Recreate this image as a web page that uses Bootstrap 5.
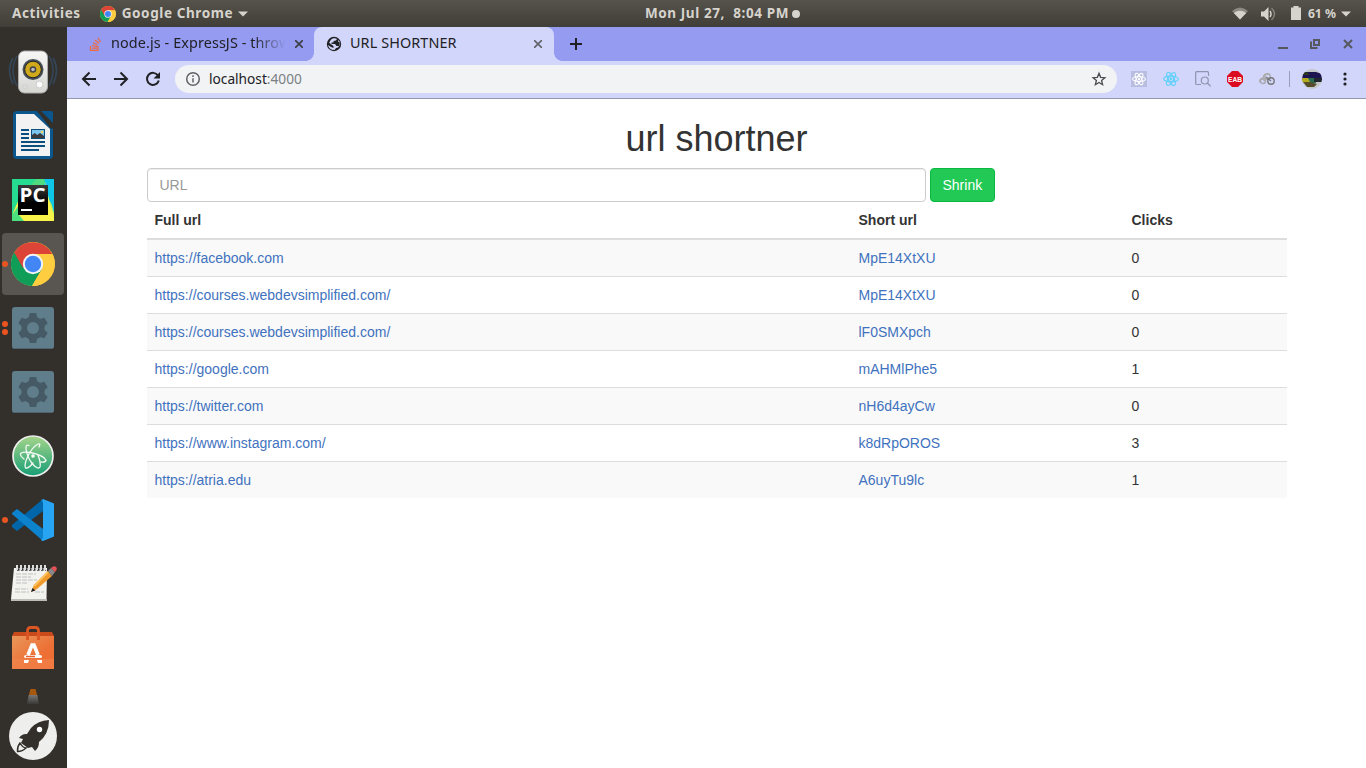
<!DOCTYPE html>
<html lang="en">
<head>
<meta charset="utf-8">
<title>URL SHORTNER</title>
<meta name="viewport" content="width=device-width, initial-scale=1">
<link href="https://cdn.jsdelivr.net/npm/bootstrap@5.3.0/dist/css/bootstrap.min.css" rel="stylesheet">
<style>
  html, body { height: 100%; overflow: hidden; }
  body { font-family: "Liberation Sans", Arial, sans-serif; font-size: 14px; line-height: 20px; color: #333; background: #fff; }
  svg { display: block; flex: none; }

  /* Desktop panel */
  .panel { height: 27px; background: linear-gradient(#56534b, #403e38); color: #d6d3cd; font: 700 13.5px/27px "Noto Sans", sans-serif; letter-spacing: .6px; display: grid; grid-template-columns: 1fr auto 1fr; white-space: pre; }
  .panel .clock { margin-left: 79px; }
  .panel .battery { margin-left: 7px; font-size: 12.2px; letter-spacing: 0; }

  /* Launcher */
  .dock { width: 67px; background: #33302c; padding-top: 13px; flex: none; }
  .tile { height: 64px; width: 66px; position: relative; }
  .tile.is-active::before { content: ""; position: absolute; inset: 1px 2px; background: #595651; border-radius: 4px; }
  .tile svg { position: relative; }
  .pips { position: absolute; left: 2px; top: 0; bottom: 0; }
  .pips i { width: 6px; height: 6px; border-radius: 50%; background: #e95420; margin: 1.2px 0; }

  /* Browser chrome */
  .browser-ui { font-family: "Noto Sans", sans-serif; color: #202124; white-space: nowrap; }
  .tabstrip { height: 34px; background: #959bf1; font-size: 14.4px; }
  .tabstrip span { padding-bottom: 2px; letter-spacing: .1px; }
  .tab-idle { width: 247px; padding-left: 22px; }
  .tab-idle .ttl { width: 182px; -webkit-mask-image: linear-gradient(90deg, #000 78%, transparent 96%); mask-image: linear-gradient(90deg, #000 78%, transparent 96%); }
  .tab-current { width: 240px; background: #d3d6fb; border-radius: 8px 8px 0 0; position: relative; padding-left: 12px; }
  .tab-current::before, .tab-current::after { content: ""; position: absolute; bottom: 0; width: 8px; height: 8px; }
  .tab-current::before { left: -8px; background: radial-gradient(circle at 0 0, #959bf1 7.5px, #d3d6fb 8px); }
  .tab-current::after { right: -8px; background: radial-gradient(circle at 100% 0, #959bf1 7.5px, #d3d6fb 8px); }
  .toolbar { height: 38px; background: #d3d6fb; border-bottom: 1px solid #9496b0; padding: 4px 0 5px 14px; }
  .omnibox { width: 942px; height: 28px; background: #f1f3f4; border-radius: 14px; margin-left: 14px; padding: 0 10px; font-size: 13.7px; }
  .omnibox .port { color: #7c8085; }

  /* Page */
  .page-wrap { max-width: 1170px; padding: 0 15px; }
  .page-title { font-size: 36px; line-height: 39px; margin: 20px 0 10px; font-weight: 400; }
  .url-field { width: 779px; height: 34px; font-size: 14px; line-height: 20px; padding: 6px 12px; border: 1px solid #ccc; border-radius: 4px; box-shadow: inset 0 1px 1px rgba(0,0,0,.075); }
  .url-field::placeholder { color: #999; }
  .btn-shrink { --bs-btn-color: #fff; --bs-btn-bg: #22c955; --bs-btn-border-color: #08b842; height: 34px; font-size: 14px; line-height: 20px; padding: 6px 12px; border-radius: 4px; }
  .links { table-layout: fixed; --bs-table-color: #333; color: #333; margin: 0; }
  .links > :not(caption) > * > * { padding: 8px; border: 0; border-top: 1px solid #ddd; box-shadow: none; }
  .links > thead > tr > th { border-top: 0; border-bottom: 2px solid #ddd; height: 37px; }
  .links > tbody > tr:nth-child(odd) > td { background: #f9f9f9; }
  .links > tbody > tr:first-child > td { border-top: 0; }
  .links a { color: #3f72be; text-decoration: none; }
</style>
</head>
<body class="d-flex flex-column">

<svg width="0" height="0" class="position-absolute" aria-hidden="true">
  <defs>
    <symbol id="chrome" viewBox="0 0 44 44">
      <circle cx="22" cy="22" r="22" fill="#fcc934"/>
      <path d="M3.200 10.500A22 22 0 0 0 21 44l10-17-9-1Z" fill="#109d58"/>
      <path d="M3.200 10.500 12 26 22 12H41.300A22 22 0 0 0 3.200 10.500Z" fill="#dc4437"/>
      <path d="M22 12H41.300A22 22 0 0 1 21 44l10-17Z" fill="#ffcd40"/>
      <circle cx="22" cy="22" r="10.200" fill="#f4f4f4"/><circle cx="22" cy="22" r="8.200" fill="#4285f4"/>
    </symbol>
    <symbol id="gear" viewBox="0 0 42 42">
      <rect width="42" height="42" rx="3" fill="#607d8b"/><path d="M2 41.500h38" stroke="#4d6470"/>
      <g fill="#455a64"><circle cx="21" cy="21" r="11.500"/><path id="cog" d="M17.800 6h6.400l1.300 6v18l-1.300 6h-6.400l-1.300-6V12Z"/><use href="#cog" transform="rotate(60 21 21)"/><use href="#cog" transform="rotate(120 21 21)"/></g>
      <circle cx="21" cy="21" r="6" fill="#607d8b"/>
    </symbol>
    <symbol id="react" viewBox="0 0 16 16">
      <g fill="none" stroke="currentColor" stroke-width="1.200"><ellipse cx="8" cy="8" rx="7.300" ry="2.800"/><ellipse cx="8" cy="8" rx="7.300" ry="2.800" transform="rotate(60 8 8)"/><ellipse cx="8" cy="8" rx="7.300" ry="2.800" transform="rotate(120 8 8)"/></g><circle cx="8" cy="8" r="1.400" fill="currentColor"/>
    </symbol>
    <linearGradient id="gAtom" x2="0" y2="1"><stop stop-color="#a5d58a"/><stop offset="1" stop-color="#169e75"/></linearGradient>
    <linearGradient id="gBag" x2="1" y2="1"><stop stop-color="#e9975b"/><stop offset=".6" stop-color="#ed7136"/><stop offset="1" stop-color="#ef6a30"/></linearGradient>
    <linearGradient id="gBody" x2="0" y2="1"><stop stop-color="#f7f7f6"/><stop offset="1" stop-color="#d5d5d2"/></linearGradient>
    <linearGradient id="gFade" x2="0" y2="1"><stop stop-color="#777"/><stop offset="1" stop-color="#3b3834"/></linearGradient>
    <linearGradient id="gPc" x2="1" y2="1"><stop stop-color="#21d789"/><stop offset=".5" stop-color="#50e070"/><stop offset="1" stop-color="#fcf84a"/></linearGradient>
    <linearGradient id="gInk" x2="0" y2="1"><stop stop-color="#3a3a3a"/><stop offset=".6" stop-color="#000"/></linearGradient>
  </defs>
</svg>

<header class="panel">
  <div class="d-flex align-items-center ps-2">
    <span class="ms-1">Activities</span>
    <svg width="16" height="16" style="margin-left:19px"><use href="#chrome"/></svg>
    <span style="margin-left:6px">Google Chrome</span>
    <svg width="10" height="6" style="margin-left:5px"><path d="M0 .5h10L5 5.500Z" fill="#d6d3cd"/></svg>
  </div>
  <div class="clock d-flex align-items-center"><span>Mon Jul 27,  8:04 PM</span><svg width="8" height="8" style="margin-left:3px"><circle cx="4" cy="4" r="4" fill="#d6d3cd"/></svg></div>
  <div class="d-flex align-items-center justify-content-end" style="padding-right:15px">
    <svg width="16" height="14" viewBox="0 0 16 14"><path d="M0 4Q8-3 16 4L8 12.500Z" fill="#8d8a83"/><path d="M1.800 6Q8 1.500 14.200 6L8 12.500Z" fill="#d6d3cd"/></svg>
    <svg width="16" height="14" viewBox="0 0 16 14" style="margin-left:13px"><path d="M0 4.500h3L7.500 0v14L3 9.500H0Z" fill="#d6d3cd"/><path d="M9 4q2 3 0 6" fill="none" stroke="#d6d3cd" stroke-width="1.500"/><path d="M10.500 1q6 6 0 12" fill="none" stroke="#858279" stroke-width="1.500"/></svg>
    <svg width="10" height="14" viewBox="0 0 10 14" style="margin:-1px 0 0 14px"><path d="M2.500 0h5v1.500H10V14H0V1.500h2.500Z" fill="#d6d3cd"/></svg>
    <span class="battery">61 %</span>
    <svg width="10" height="6" style="margin-left:5px"><path d="M0 .5h10L5 5.500Z" fill="#d6d3cd"/></svg>
  </div>
</header>

<div class="d-flex flex-grow-1">
  <nav class="dock">
    <div class="tile d-flex align-items-center justify-content-center">
      <svg width="50" height="44" viewBox="0 0 50 44"><g fill="none" stroke="#34475a" stroke-width="1.500"><path d="M9 6Q1 20 9 36M5 8Q-2 20 5 34M41 6Q49 20 41 36M45 8Q52 20 45 34"/></g><rect x="10.500" y="1" width="29" height="42" rx="6" fill="url(#gBody)" stroke="#aaa"/><circle cx="25" cy="19.500" r="10.500" fill="#474f58"/><circle cx="25" cy="19.500" r="8.300" fill="#cfa81b" stroke="#222"/><circle cx="25" cy="19.500" r="3.300" fill="#444"/><circle cx="25" cy="19.500" r="1.800" fill="#bbb"/><circle cx="31.500" cy="34.500" r="3.500" fill="#fafafa" stroke="#ccc"/><path d="M15 35h4v4h-4Z" fill="none" stroke="#d2d2d0"/></svg>
    </div>
    <div class="tile d-flex align-items-center justify-content-center">
      <svg width="40" height="48" viewBox="0 0 40 48" style="top:-1px"><path d="M4 0h20l16 16v28q0 4-4 4H4q-4 0-4-4V4q0-4 4-4Z" fill="#0b568d"/><path d="M24 0h4l12 12v5l-2 1Z" fill="#33302c"/><path d="M28 0h10q2 0 2 2v10Z" fill="#0b568d"/><path d="M3 3h18l16 15v27H3Z" fill="#f2f2f2"/><path d="M8 19h8M8 23h8M8 27h8M8 31h24M8 35h24M8 39h18" stroke="#0b4f7e" stroke-width="2"/><path d="M18 18h14v10H18Z" fill="#0b4f7e"/><path d="M19 19h12v8H19Z" fill="#7cc5ee"/><path d="M19 27v-3l3-2 2 2 3-2 4 3v2Z" fill="#3b3b3b"/><circle cx="29" cy="21" r="1.300" fill="#f6d15b"/></svg>
    </div>
    <div class="tile d-flex align-items-center justify-content-center">
      <svg width="42" height="42" viewBox="0 0 42 42"><path d="M0 0h42v42H0Z" fill="url(#gPc)"/><path d="M22 0h20v28Z" fill="#07c3f2"/><path d="M32 0 36 16 42 40V42H10L0 34 6 22 36 8Z" fill="#f9f24a"/><path d="M0 0h24L6 22 0 36Z" fill="#26dc91"/><path d="M24 0h12L30 8H18Z" fill="#4fdc80"/><path d="M32 0h10v34L36 12Z" fill="#0ec6e8"/><path d="M0 36 7 26v10l5 6H0Z" fill="#4be07d"/><path d="M6 6h30v30H6Z" fill="url(#gInk)"/><path d="M9 30h11v2H9Z" fill="#fff"/><text x="7.500" y="23.400" font-family="Open Sans, sans-serif" font-weight="700" font-size="20" textLength="26" lengthAdjust="spacingAndGlyphs" fill="#fff">PC</text></svg>
    </div>
    <div class="tile is-active d-flex align-items-center justify-content-center">
      <span class="pips d-flex flex-column justify-content-center"><i></i></span><svg width="44" height="44"><use href="#chrome"/></svg>
    </div>
    <div class="tile d-flex align-items-center justify-content-center">
      <span class="pips d-flex flex-column justify-content-center"><i></i><i></i></span><svg width="42" height="42"><use href="#gear"/></svg>
    </div>
    <div class="tile d-flex align-items-center justify-content-center"><svg width="42" height="42"><use href="#gear"/></svg></div>
    <div class="tile d-flex align-items-center justify-content-center">
      <svg width="42" height="42" viewBox="0 0 42 42"><circle cx="21" cy="21" r="20" fill="url(#gAtom)" stroke="#eee" stroke-width="1.700"/><g fill="none" stroke="#f3faf5" stroke-width="1.300" stroke-linecap="round"><path d="M12 24Q8 21 8.500 18.500 11 16.500 18 17.500 31 20 34 25 33.500 27.500 29 27"/><path d="M27 12Q29 8 26 9 20 12 15.500 22 12 30 13.500 33 16 34 21 28"/><path d="M17 10.500Q13.500 9 14 14 15 22 20.500 29 26 35 28 32 29 28 26 20"/></g><circle cx="21" cy="21" r="1.800" fill="#fff"/></svg>
    </div>
    <div class="tile d-flex align-items-center justify-content-center">
      <span class="pips d-flex flex-column justify-content-center"><i></i></span>
      <svg width="42" height="42" viewBox="0 0 42 42"><path d="M31 0v12L5 32 0 28v-2Z" fill="#0065a9"/><path d="M5 10 31 30v12L0 15v-1Z" fill="#0d83cd"/><path d="M31 0 42 4.500v33L31 42q-1 0-2-1l2-2Z" fill="#27a5f3"/><path d="m31 0-2 1 2 3Z" fill="#1988d1"/></svg>
    </div>
    <div class="tile d-flex align-items-center justify-content-center">
      <svg width="46" height="38" viewBox="0 0 46 38" style="left:1px;top:-1px"><path d="M3 4h33l-.5 31H0Z" fill="#f2f2ef"/><path d="M0 35h36v2H0Z" fill="#bcbcb8"/><path d="M6 5.500h29" stroke="#333" stroke-width="2.500" stroke-dasharray="2.500 1.500"/><path d="M6 1v5M10 1v5M14 1v5M18 1v5M22 1v5M26 1v5M30 1v5M34 1v5" stroke="#ddd" stroke-width="2"/><path d="M5 10h20M5 13h15M5 16h21M5 19h12M4 25h13M4 28h14M24 28h9" stroke="#c0c0c0" stroke-dasharray="5 1"/><path d="m20 28 3-7 14-14 4 5-15 13Z" fill="#f09a2c"/><path d="m23 22 14-14" stroke="#ffc161" stroke-width="2"/><path d="m37 7 3-3 4 4-3 4Z" fill="#88888a"/><path d="m40 4q3-3 5-1t-1 5Z" fill="#e65356"/><path d="m20 28 1.500-4 3 2.500Z" fill="#222"/></svg>
    </div>
    <div class="tile d-flex align-items-center justify-content-center">
      <svg width="42" height="44" viewBox="0 0 42 44"><path d="M2 6h38l2 4v33H0V10Z" fill="#c94a1b"/><path d="M0 10h42v33H0Z" fill="url(#gBag)"/><path d="M0 33h42v10H0Z" fill="#f38750" opacity=".55"/><path d="M15.500 14V5q0-3.500 3-3.500h5q3 0 3 3.500v9" fill="none" stroke="#dc5524" stroke-width="2.800"/><path d="M14 29h14q2 0 2 1.500T28 32H14q-2 0-2-1.500t2-1.500Z" fill="#fff"/><path d="M14 30.500h9" stroke="#e66331" stroke-width="1.600"/><path d="m16 29 4-10h2l4 10" fill="none" stroke="#fff" stroke-width="3.600"/><path d="M12 34h5l-1 3h-4ZM25 34h5v3h-4Z" fill="#fff"/></svg>
    </div>
    <div class="d-flex justify-content-center" style="width:66px;padding-top:8px;height:32px"><svg width="12" height="16" viewBox="0 0 14 16" preserveAspectRatio="none"><path d="M4 1h6l2 7H2Z" fill="#a7580f"/><path d="M2 7h10l2 9H0Z" fill="url(#gFade)"/></svg></div>
    <div class="d-flex justify-content-center" style="width:66px">
      <svg width="48" height="48" viewBox="0 0 48 48"><circle cx="24" cy="24" r="24" fill="#eeeeec"/><path d="M40 8q-11 .5-18 8l-4 6q-5-.5-8 4l4 1-2 4 7 5 4-1 3 4q4-3 4-9Q40 22 40 8Z" fill="#33302c"/><circle cx="30.500" cy="17.500" r="2.700" fill="#fff"/><path d="M11 31q-3 4-2.500 8.500 5 0 8.500-3.500-3 0-6-5Z" fill="none" stroke="#33302c" stroke-width="1.400"/></svg>
    </div>
  </nav>

  <div class="flex-grow-1">
    <div class="browser-ui">
      <div class="tabstrip d-flex">
        <div class="tab-idle d-flex align-items-center">
          <svg width="14" height="14" viewBox="0 0 14 14" fill="none" stroke="#f1683a" stroke-width="1.200"><path d="M1.500 9v4.300h7.500V9M3 11.200h5M3 8.500l5.300.8M4 5.700l4.600 2M6 3l4 3.300M9 .7l2.500 4.300"/></svg>
          <span class="ttl" style="margin-left:8px">node.js - ExpressJS - throw</span>
          <svg width="8" height="8" style="margin-left:2px"><path d="m0 0 8 8M8 0 0 8" stroke="#3c4043" stroke-width="1.700"/></svg>
        </div>
        <div class="tab-current d-flex align-items-center">
          <svg width="16" height="16" viewBox="0 0 16 16"><circle cx="8" cy="8" r="7.200" fill="#202124"/><path d="M7.500 2.200Q10 2 11 3l-1 1.500-2.500.5v1.500H5.500V8H9l1.500 2H13q1-2 .8-3.500L12 5.500 12.500 4q2 2 1.700 4.500L12 11.500l-2 .5-1.500 2Q3 14 2 9l3 2 2.500 1V10L5 8.200 3.200 6.800Q4.500 3 7.500 2.200Z" fill="#d3d6fb"/></svg>
          <span style="margin-left:8px">URL SHORTNER</span>
          <svg width="8" height="8" class="ms-auto" style="margin-right:12px"><path d="m0 0 8 8M8 0 0 8" stroke="#5f6368" stroke-width="1.600"/></svg>
        </div>
        <svg width="12" height="12" class="align-self-center" style="margin-left:16px"><path d="M6 0v12M0 6h12" stroke="#202124" stroke-width="2"/></svg>
        <div class="ms-auto d-flex align-items-center" style="padding-right:13px">
          <svg width="10" height="10"><path d="M0 9h10" stroke="#55585c" stroke-width="2"/></svg>
          <svg width="10" height="10" style="margin:0 23px 0 22px" fill="none" stroke="#55585c" stroke-width="2"><path d="M4 1h5v5H4ZM1 2.500V9h6.500"/></svg>
          <svg width="10" height="10"><path d="m1 1 8 8M9 1 1 9" stroke="#55585c" stroke-width="2"/></svg>
        </div>
      </div>

      <div class="toolbar d-flex align-items-center">
        <svg width="16" height="16" fill="none" stroke="#202124" stroke-width="2"><path d="M15 8H2.500M8.500 1.500 2 8l6.500 6.500"/></svg>
        <svg width="16" height="16" style="margin-left:16px" fill="none" stroke="#202124" stroke-width="2"><path d="M1 8h12.500M7.500 1.500 14 8l-6.500 6.500"/></svg>
        <svg width="16" height="16" style="margin-left:16px"><path d="M13 4.500A6 6 0 1 0 13.800 9.500" fill="none" stroke="#202124" stroke-width="2"/><path d="M15 1v6.500H8.500Z" fill="#202124"/></svg>
        <div class="omnibox d-flex align-items-center">
          <svg width="16" height="16" fill="none" stroke="#5f6368" stroke-width="1.500"><circle cx="8" cy="8" r="6.300"/><path d="M8 7.200V11.500M8 4.300v1.700"/></svg>
          <span style="margin-left:8px">localhost<span class="port">:4000</span></span>
          <svg width="16" height="16" class="ms-auto"><path d="m8 2.300 1.600 4 4.300.4-3.300 2.800 1 4.200L8 11.500l-3.600 2.200 1-4.200-3.300-2.800 4.300-.4Z" fill="none" stroke="#494c50" stroke-width="1.300"/></svg>
        </div>
        <svg width="16" height="16" style="margin-left:14px;color:#fff"><path d="M0 0h16v16H0Z" fill="#b9bde0"/><use href="#react" x="1" y="1" width="14" height="14"/></svg>
        <svg width="16" height="16" style="margin-left:16px;color:#61d1fa"><use href="#react"/></svg>
        <svg width="16" height="16" style="margin-left:16px" fill="none" stroke="#8f93ad" stroke-width="1.200"><path d="M6 13.500H1.500Q.7 13.500.7 12.500V1.700Q.7.700 1.700.7H12.500q1 0 1 1V5"/><circle cx="9.800" cy="9.500" r="3.500"/><path d="m12.300 12 3.400 3.400"/></svg>
        <svg width="16" height="16" style="margin-left:16px"><path d="M5 0h6l5 5v6l-5 5H5l-5-5V5Z" fill="#dc0a20"/><text x="1" y="10.800" textLength="14" lengthAdjust="spacingAndGlyphs" font-family="Liberation Sans" font-weight="700" font-size="7.500" fill="#fff">EAB</text></svg>
        <svg width="16" height="16" style="margin-left:16px" fill="none" stroke-width="1.400"><path d="M1.500 12Q-.5 8.500 3 7.500L6 10M4 7Q5 2 9 3.500" stroke="#aaaaae"/><circle cx="8.500" cy="5.500" r="2.800" stroke="#aaa"/><circle cx="12" cy="10" r="3.200" stroke="#77787c"/><circle cx="4" cy="10" r="2.500" stroke="#aaaab0"/><path d="m7 6 5 4" stroke="#77787c"/></svg>
        <span style="margin:0 12px 0 14px;width:1px;height:16px;background:#9a9dbb"></span>
        <svg width="20" height="20" viewBox="0 0 20 20"><defs><clipPath id="av"><circle cx="10" cy="10" r="10"/></clipPath></defs><g clip-path="url(#av)"><path d="M0 0h20v20H0Z" fill="#c3c7c6"/><path d="M0 5 4 3h10l6 2v6H0Z" fill="#1c1550"/><path d="M0 3h5l3 3H0Z" fill="#2b3a22"/><path d="M0 9h13v4H0Z" fill="#b3aa22"/><path d="M6 9h8v5l-5 1Z" fill="#2c6a4c"/><path d="M12 9h8v4h-8Z" fill="#22272f"/><path d="M1 13h7l7 2-3 3H5Z" fill="#564d2a"/></g></svg>
        <svg width="4" height="14" style="margin-left:20.500px" fill="#202124"><circle cx="2" cy="2" r="1.600"/><circle cx="2" cy="7" r="1.600"/><circle cx="2" cy="12" r="1.600"/></svg>
      </div>
    </div>

    <main class="page-wrap mx-auto">
      <div class="d-flow-root">
        <h1 class="page-title text-center">url shortner</h1>
        <form class="d-flex gap-1">
          <input type="text" class="form-control url-field flex-grow-0" placeholder="URL" aria-label="URL">
          <button type="button" class="btn btn-shrink">Shrink</button>
        </form>
        <table class="table links">
          <colgroup><col style="width:704px"><col style="width:273px"><col></colgroup>
          <thead><tr><th>Full url</th><th>Short url</th><th>Clicks</th></tr></thead>
          <tbody>
            <tr><td><a href="#">https://facebook.com</a></td><td><a href="#">MpE14XtXU</a></td><td>0</td></tr>
            <tr><td><a href="#">https://courses.webdevsimplified.com/</a></td><td><a href="#">MpE14XtXU</a></td><td>0</td></tr>
            <tr><td><a href="#">https://courses.webdevsimplified.com/</a></td><td><a href="#">lF0SMXpch</a></td><td>0</td></tr>
            <tr><td><a href="#">https://google.com</a></td><td><a href="#">mAHMlPhe5</a></td><td>1</td></tr>
            <tr><td><a href="#">https://twitter.com</a></td><td><a href="#">nH6d4ayCw</a></td><td>0</td></tr>
            <tr><td><a href="#">https://www.instagram.com/</a></td><td><a href="#">k8dRpOROS</a></td><td>3</td></tr>
            <tr><td><a href="#">https://atria.edu</a></td><td><a href="#">A6uyTu9lc</a></td><td>1</td></tr>
          </tbody>
        </table>
      </div>
    </main>
  </div>
</div>

<script src="https://cdn.jsdelivr.net/npm/bootstrap@5.3.0/dist/js/bootstrap.bundle.min.js"></script>
</body>
</html>
